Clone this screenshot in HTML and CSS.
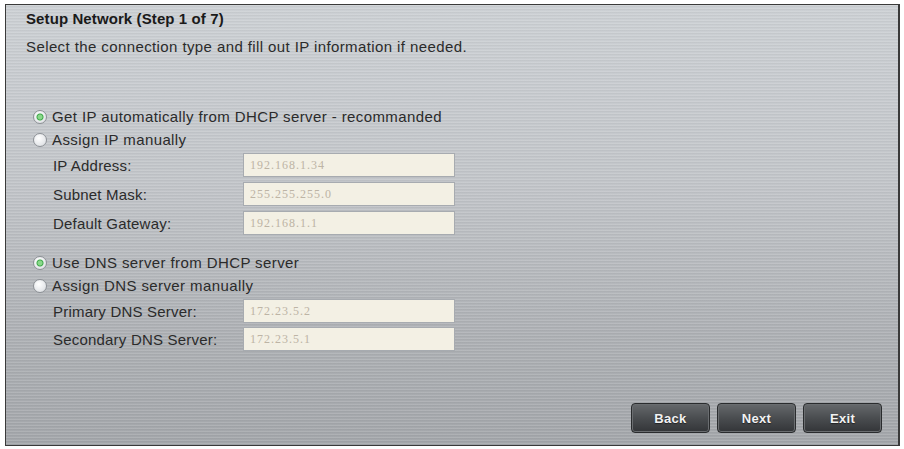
FILE: index.html
```html
<!DOCTYPE html>
<html lang="en">
  <head>
    <meta charset="UTF-8" />
    <meta name="viewport" content="width=device-width, initial-scale=1.0" />
    <title>Setup Network</title>
    <link rel="stylesheet" href="styles.css">
  </head>
  <body>
    <div class="wizard">
      <h2 class="wizard-title">Setup Network (Step 1 of 7)</h2>
      <p class="wizard-desc">Select the connection type and fill out IP information if needed.</p>

      <div class="group group-ip">
        <label class="choice"><input type="radio" name="ipMode" checked /> Get IP automatically from DHCP server - recommanded</label>
        <label class="choice"><input type="radio" name="ipMode" /> Assign IP manually</label>
        <div class="field">
          <span>IP Address:</span>
          <input type="text" value="192.168.1.34" readonly />
        </div>
        <div class="field">
          <span>Subnet Mask:</span>
          <input type="text" value="255.255.255.0" readonly />
        </div>
        <div class="field">
          <span>Default Gateway:</span>
          <input type="text" value="192.168.1.1" readonly />
        </div>
      </div>

      <div class="group group-dns">
        <label class="choice"><input type="radio" name="dnsMode" checked /> Use DNS server from DHCP server</label>
        <label class="choice"><input type="radio" name="dnsMode" /> Assign DNS server manually</label>
        <div class="field">
          <span>Primary DNS Server:</span>
          <input type="text" value="172.23.5.2" readonly />
        </div>
        <div class="field">
          <span>Secondary DNS Server:</span>
          <input type="text" value="172.23.5.1" readonly />
        </div>
      </div>

      <div class="actions">
        <button>Back</button>
        <button>Next</button>
        <button>Exit</button>
      </div>
    </div>
  </body>
</html>
```

FILE: styles.css
```css
* {
  box-sizing: border-box;
}
body {
  margin: 0;
  background: #fff;
  font-family: "Liberation Sans", Arial, sans-serif;
  color: #2b2b2b;
}
.wizard {
  margin: 4px 4px 0 5px;
  height: 442px;
  padding: 5px 0 0 20px;
  display: flex;
  flex-direction: column;
  border: 1px solid #3a3a3a;
  border-right: 2px solid #3a3a3a;
  background:
    repeating-linear-gradient(to bottom, rgba(255, 255, 255, 0.12) 0 1px, rgba(0, 0, 0, 0.03) 1px 2px, transparent 2px 3px),
    linear-gradient(to bottom, #ccd0d4 0%, #c2c5c9 40%, #adb0b4 75%, #a3a6aa 100%);
}
.wizard-title {
  margin: 0;
  font-size: 15px;
  line-height: 18px;
  font-weight: bold;
  letter-spacing: 0.1px;
  color: #1a1a1a;
}
.wizard-desc {
  margin: 10px 0 0;
  font-size: 15px;
  line-height: 18px;
  letter-spacing: 0.4px;
}
.group {
  display: flex;
  flex-direction: column;
}
.group-ip {
  margin-top: 49px;
}
.group-dns {
  margin-top: 16px;
}
.choice {
  display: flex;
  align-items: center;
  height: 23px;
  padding-left: 7px;
  font-size: 15px;
  letter-spacing: 0.4px;
}
.choice input {
  appearance: none;
  -webkit-appearance: none;
  margin: 0 5px 0 0;
  width: 14px;
  height: 14px;
  border-radius: 50%;
  border: 1px solid #8d9196;
  background: radial-gradient(circle at 40% 35%, #ffffff, #e3e5e8 70%, #cfd2d6);
}
.choice input:checked {
  background:
    radial-gradient(circle, #8ad88a 0 2px, #3fa84a 3px, transparent 4px),
    radial-gradient(circle at 40% 35%, #ffffff, #e3e5e8 70%, #cfd2d6);
}
.field {
  display: flex;
  align-items: center;
  margin-top: 5px;
  padding-left: 27px;
  font-size: 15px;
  letter-spacing: 0.2px;
}
.choice + .field {
  margin-top: 2px;
}
.group-dns .field + .field {
  margin-top: 4px;
}
.field span {
  width: 190px;
}
.field input {
  width: 212px;
  height: 24px;
  padding: 0 6px;
  border: 1px solid #a7abb0;
  background: #f3f0e4;
  color: #bdb4a5;
  font-family: "Liberation Serif", "Times New Roman", serif;
  font-size: 12px;
  letter-spacing: 1px;
  outline: none;
}
.actions {
  margin-top: auto;
  padding: 0 16px 12px 0;
  display: flex;
  justify-content: flex-end;
  gap: 7px;
}
.actions button {
  width: 79px;
  height: 30px;
  border: 1px solid #2a2c2e;
  border-radius: 4px;
  box-shadow: inset 0 0 0 1px #6a6d70;
  background: linear-gradient(to bottom, #66696c 0%, #4a4d50 50%, #333538 100%);
  color: #f2f2f2;
  font-family: "Liberation Sans", Arial, sans-serif;
  font-size: 13px;
  font-weight: bold;
  letter-spacing: 0.3px;
  text-shadow: 0 1px 1px rgba(0, 0, 0, 0.5);
}
```
